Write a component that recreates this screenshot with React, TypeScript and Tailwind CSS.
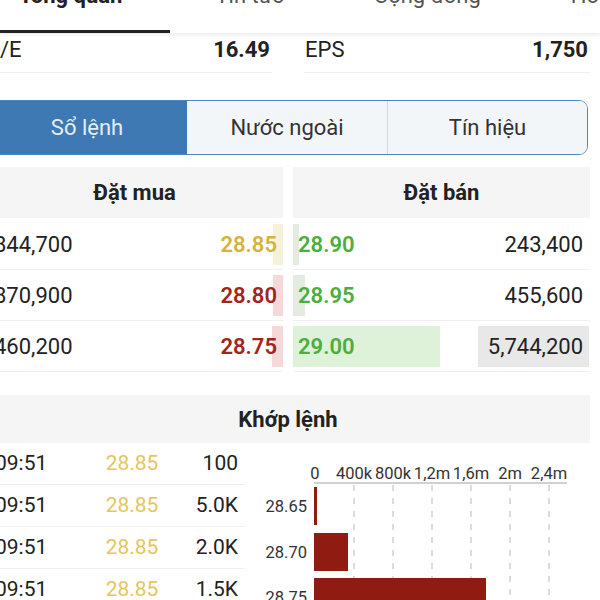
import React from "react"

type BookRow = {
  volume: string
  price: string
  priceClass: string
  bar: number
  barClass: string
  highlight?: boolean
}

const topTabs = ["Tổng quan", "Tin tức", "Cộng đồng", "Hồ sơ"]

const bids: BookRow[] = [
  { volume: "844,700", price: "28.85", priceClass: "text-[#d7b23c]", bar: 10, barClass: "bg-[#f6f1da]" },
  { volume: "870,900", price: "28.80", priceClass: "text-[#a3241b]", bar: 10, barClass: "bg-[#f6d8d8]" },
  { volume: "460,200", price: "28.75", priceClass: "text-[#a3241b]", bar: 11, barClass: "bg-[#f6d8d8]" },
]

const asks: BookRow[] = [
  { volume: "243,400", price: "28.90", priceClass: "text-[#4cae3d]", bar: 6, barClass: "bg-[#e4ece2]" },
  { volume: "455,600", price: "28.95", priceClass: "text-[#4cae3d]", bar: 12, barClass: "bg-[#e4ece2]" },
  { volume: "5,744,200", price: "29.00", priceClass: "text-[#4cae3d]", bar: 147, barClass: "bg-[#ddf2d8]", highlight: true },
]

const trades = [
  { time: "09:51", price: "28.85", volume: "100" },
  { time: "09:51", price: "28.85", volume: "5.0K" },
  { time: "09:51", price: "28.85", volume: "2.0K" },
  { time: "09:51", price: "28.85", volume: "1.5K" },
]

const ticks = [
  { label: "0", x: 70 },
  { label: "400k", x: 109 },
  { label: "800k", x: 148 },
  { label: "1,2m", x: 187 },
  { label: "1,6m", x: 226 },
  { label: "2m", x: 265 },
  { label: "2,4m", x: 304 },
]

const volumeBars = [
  { price: "28.65", y: 44, w: 3 },
  { price: "28.70", y: 90, w: 34 },
  { price: "28.75", y: 135, w: 172 },
]

function VolumeChart() {
  return (
    <svg width="345" height="160" viewBox="0 0 345 160" className="shrink-0">
      {ticks.map((t) => (
        <text key={t.label} x={t.x} y={36} textAnchor="middle" fontSize="16.5" fill="#333" fontFamily="Roboto, sans-serif">
          {t.label}
        </text>
      ))}
      <line x1="69" y1="40" x2="322" y2="40" stroke="#d0d0d0" strokeWidth="2" />
      {ticks.slice(1).map((t) => (
        <line key={t.label} x1={t.x} y1="42" x2={t.x} y2="160" stroke="#b8b8b8" strokeWidth="1" strokeDasharray="6 7" />
      ))}
      {volumeBars.map((b) => (
        <g key={b.price}>
          <rect x="69" y={b.y} width={b.w} height="38" fill="#8f1b11" />
          <text x="62" y={b.y + 25} textAnchor="end" fontSize="16.5" fill="#333" fontFamily="Roboto, sans-serif">
            {b.price}
          </text>
        </g>
      ))}
    </svg>
  )
}

export default function App() {
  return (
    <div className="h-[600px] w-[600px] overflow-hidden bg-white font-[Roboto,sans-serif] text-[#222]">
      <div className="relative z-10 -mt-[40px] flex h-[73px] shadow-[0_2px_4px_rgba(0,0,0,0.08)]">
        {topTabs.map((tab, i) => (
          <div
            key={tab}
            className={
              i === 0
                ? "-ml-[26px] shrink-0 border-b-[3px] border-[#222] pl-[45px] pr-[48px] pt-[22px] text-[22px] leading-[28px] font-bold text-[#222]"
                : "shrink-0 px-[45px] pt-[22px] text-[22px] leading-[28px] text-[#555]"
            }
          >
            {tab}
          </div>
        ))}
      </div>

      <div className="-ml-[14px] w-[604px]">
        <div className="flex gap-[32px]">
          <div className="flex h-[40px] w-[286px] items-center justify-between border-b border-[#f0f0f0] pb-[6px] pr-[2px] text-[22px]">
            <span>P/E</span>
            <span className="font-bold">16.49</span>
          </div>
          <div className="flex h-[40px] flex-1 items-center justify-between border-b border-[#f0f0f0] pb-[6px] pl-[1px] pr-[2px] text-[22px]">
            <span>EPS</span>
            <span className="font-bold">1,750</span>
          </div>
        </div>

        <div className="mt-[27px] flex h-[55px] w-[602px] overflow-hidden rounded-r-[9px] border border-[#4d85bf] text-[22px]">
          <div className="flex w-[200px] items-center justify-center bg-[#3e79b3] text-[#e3edf7]">Sổ lệnh</div>
          <div className="flex w-[201px] items-center justify-center border-r border-[#d3d8dd] bg-[#f3f6f9] text-[#333]">Nước ngoài</div>
          <div className="flex flex-1 items-center justify-center bg-[#f3f6f9] text-[#333]">Tín hiệu</div>
        </div>

        <div className="mt-[12px] flex gap-[10px]">
          <div className="w-[297px]">
            <div className="flex h-[51px] items-center justify-center bg-[#f5f5f5] text-[22px] font-bold">Đặt mua</div>
            <div className="mt-[1px]">
              {bids.map((r) => (
                <div key={r.price} className="relative flex h-[51px] items-center justify-between border-b border-[#f0f0f0] pl-[8px] pr-[6px] text-[22px]">
                  <div className={`absolute top-[5px] right-0 bottom-[4px] ${r.barClass}`} style={{ width: r.bar }} />
                  <span className="relative">{r.volume}</span>
                  <span className={`relative font-semibold ${r.priceClass}`}>{r.price}</span>
                </div>
              ))}
            </div>
          </div>
          <div className="w-[297px]">
            <div className="flex h-[51px] items-center justify-center bg-[#f5f5f5] text-[22px] font-bold">Đặt bán</div>
            <div className="mt-[1px]">
              {asks.map((r) => (
                <div key={r.price} className="relative flex h-[51px] items-center justify-between border-b border-[#f0f0f0] pl-[5px] text-[22px]">
                  <div className={`absolute top-[5px] bottom-[4px] left-0 ${r.barClass}`} style={{ width: r.bar }} />
                  <span className={`relative font-semibold ${r.priceClass}`}>{r.price}</span>
                  {r.highlight ? (
                    <span className="relative mr-[1px] flex h-[41px] items-center bg-[#e8e8e8] pl-[10px] pr-[6px]">{r.volume}</span>
                  ) : (
                    <span className="relative pr-[7px]">{r.volume}</span>
                  )}
                </div>
              ))}
            </div>
          </div>
        </div>

        <div className="mt-[23px] flex h-[48px] items-center justify-center bg-[#f5f5f5] text-[22px] font-bold">Khớp lệnh</div>

        <div className="flex">
          <div className="w-[259px] shrink-0">
            {trades.map((t, i) => (
              <div key={i} className="flex h-[42px] items-center border-b border-[#f0f0f0] text-[21px]">
                <span className="w-[95px] pl-[9px]">{t.time}</span>
                <span className="w-[102px] text-center text-[#e5c65c]">{t.price}</span>
                <span className="flex-1 pr-[7px] text-right">{t.volume}</span>
              </div>
            ))}
          </div>
          <VolumeChart />
        </div>
      </div>
    </div>
  )
}
